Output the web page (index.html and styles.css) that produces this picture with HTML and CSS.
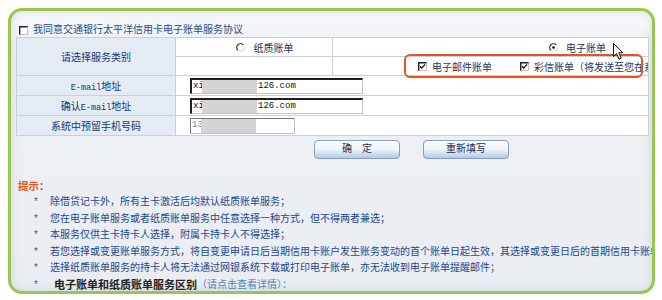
FILE: index.html
```html
<!DOCTYPE html>
<html lang="zh-CN">
<head>
<meta charset="utf-8">
<title>电子账单服务</title>
<link rel="stylesheet" href="styles.css">
</head>
<body>
<div class="frame">
  <div class="agree">
    <svg class="cb" width="9" height="9" viewBox="0 0 9 9"><rect x="0.5" y="0.5" width="8" height="8" fill="#fff" stroke="#c4c4c4"/><path d="M0.7 8.5V0.7H8.5" fill="none" stroke="#222" stroke-width="1.4"/></svg>
    <span>我同意交通银行太平洋信用卡电子账单服务协议</span>
  </div>
  <table class="form">
    <colgroup><col class="c1"><col class="c2"><col class="c3"></colgroup>
    <tr class="r1">
      <th rowspan="2">请选择服务类别</th>
      <td class="paper">
        <svg class="rd" width="9" height="9" viewBox="0 0 10 10"><circle cx="5" cy="5" r="4.2" fill="#fff" stroke="#cfcfcf"/><path d="M7.97 2.03A4.2 4.2 0 0 0 2.03 7.97" fill="none" stroke="#222" stroke-width="1.3"/></svg>
        <span>纸质账单</span>
      </td>
      <td class="ebill">
        <svg class="rd" width="9" height="9" viewBox="0 0 10 10"><circle cx="5" cy="5" r="4.2" fill="#fff" stroke="#cfcfcf"/><path d="M7.97 2.03A4.2 4.2 0 0 0 2.03 7.97" fill="none" stroke="#222" stroke-width="1.3"/><circle cx="5" cy="5" r="1.5" fill="#111"/></svg>
        <span>电子账单</span>
      </td>
    </tr>
    <tr class="r1b">
      <td></td>
      <td class="opts">
        <span class="opt">
          <svg class="cb" width="9" height="9" viewBox="0 0 9 9"><rect x="0.5" y="0.5" width="8" height="8" fill="#fff" stroke="#c4c4c4"/><path d="M0.7 8.5V0.7H8.5" fill="none" stroke="#222" stroke-width="1.4"/><path d="M2 4.3L3.7 6.1L7.1 2.4" fill="none" stroke="#111" stroke-width="1.3"/></svg>
          <span>电子邮件账单</span>
        </span>
        <span class="opt">
          <svg class="cb" width="9" height="9" viewBox="0 0 9 9"><rect x="0.5" y="0.5" width="8" height="8" fill="#fff" stroke="#c4c4c4"/><path d="M0.7 8.5V0.7H8.5" fill="none" stroke="#222" stroke-width="1.4"/><path d="M2 4.3L3.7 6.1L7.1 2.4" fill="none" stroke="#111" stroke-width="1.3"/></svg>
          <span>彩信账单（将发送至您在系统中预留的手机号码）</span>
        </span>
      </td>
    </tr>
    <tr class="r2">
      <th><span class="en">E-mail</span>地址</th>
      <td colspan="2" class="fcell"><span class="field"><span class="pre">xi</span><span class="blur"></span><span>126.com</span></span></td>
    </tr>
    <tr class="r2">
      <th>确认<span class="en">E-mail</span>地址</th>
      <td colspan="2" class="fcell"><span class="field"><span class="pre">xi</span><span class="blur"></span><span>126.com</span></span></td>
    </tr>
    <tr class="r2">
      <th>系统中预留手机号码</th>
      <td colspan="2" class="fcell"><span class="field short"><span class="pre">13</span><span class="blur"></span></span></td>
    </tr>
  </table>
  <div class="btns">
    <button class="btn">确　定</button>
    <button class="btn">重新填写</button>
  </div>
  <div class="tips-title">提示：</div>
  <ul class="tips">
    <li><span class="b">*</span><span>除借贷记卡外，所有主卡激活后均默认纸质账单服务；</span></li>
    <li><span class="b">*</span><span>您在电子账单服务或者纸质账单服务中任意选择一种方式，但不得两者兼选；</span></li>
    <li><span class="b">*</span><span>本服务仅供主卡持卡人选择，附属卡持卡人不得选择；</span></li>
    <li><span class="b">*</span><span>若您选择或变更账单服务方式，将自变更申请日后当期信用卡账户发生账务变动的首个账单日起生效，其选择或变更日后的首期信用卡账单将</span></li>
    <li><span class="b">*</span><span>选择纸质账单服务的持卡人将无法通过网银系统下载或打印电子账单，亦无法收到电子账单提醒邮件；</span></li>
    <li><span class="b">*</span><span class="strong">电子账单和纸质账单服务区别</span><span class="link">（请点击查看详情）：</span></li>
  </ul>
  <div class="mark"></div>
  <svg class="cursor" width="12" height="18" viewBox="0 0 12 18"><path d="M0.5 0.5L0.5 13.5L3.6 10.6L6 16.2L8.2 15.2L5.8 9.7L9.8 9.7Z" fill="#fff" stroke="#111" stroke-width="1"/></svg>
</div>
</body>
</html>
```

FILE: styles.css
```css
* { box-sizing: border-box; }
html, body { margin: 0; background: #fff; }
body {
  font-family: "Liberation Mono", "Noto Sans CJK SC", monospace;
  font-size: 10px;
  color: #1c4689;
}
.frame {
  position: relative;
  margin: 8px 0 0 8px;
  width: 647px;
  height: 286px;
  border: 3px solid #98c653;
  border-radius: 14px;
  overflow: hidden;
  background: linear-gradient(#f8f9fb 0, #eef1f4 30px, #e9edf1 100%);
  box-shadow: inset 0 0 8px rgba(110, 125, 150, 0.22);
  padding: 13px 0 0 5px;
}
.agree {
  height: 13px;
  line-height: 13px;
  display: flex;
  align-items: center;
  gap: 5px;
  padding-left: 3px;
  color: #264c8a;
  white-space: nowrap;
}
.cb, .rd { display: block; flex: none; }
table.form {
  width: 632px;
  border-collapse: collapse;
  table-layout: fixed;
  background: #fff;
}
col.c1 { width: 159px; }
col.c2 { width: 157px; }
col.c3 { width: 316px; }
th, td {
  border: 1px solid #c9d0da;
  padding: 0;
  white-space: nowrap;
  overflow: hidden;
  font-weight: normal;
  vertical-align: middle;
}
th {
  background: #e4ebf3;
  color: #17376e;
  text-align: center;
}
th .en { font-size: 8.5px; }
tr.r1, tr.r1b { height: 19px; }
tr.r2 { height: 20px; }
.paper, .ebill { color: #1a3460; }
.paper > *, .ebill > * { display: inline-block; vertical-align: middle; }
.paper { text-align: center; padding-left: 22px; }
.ebill { text-align: right; padding-right: 42px; }
.rd { display: inline-block; margin-right: 2px; }
.opts { padding-left: 85px; color: #1a3460; }
.opt { display: inline-flex; align-items: center; gap: 5px; vertical-align: middle; }
.opt + .opt { margin-left: 22px; }
.fcell { padding-left: 14px; }
.field {
  display: inline-flex;
  align-items: stretch;
  vertical-align: middle;
  height: 16px;
  width: 173px;
  background: #fff;
  border: 1px solid #c2c2c2;
  border-top: 2px solid #1e1e1e;
  border-left: 2px solid #1e1e1e;
  font-family: "Liberation Mono", monospace;
  font-size: 9px;
  line-height: 13px;
  color: #111;
}
.field.short {
  width: 105px;
  border-top: 1px solid #777;
  border-left: 1px solid #777;
  color: #888;
}
.field .pre { width: 10px; padding-left: 1px; }
.field .blur { width: 55px; background: #d4d4d4; margin-right: 1px; }
.btns {
  display: flex;
  justify-content: center;
  gap: 23px;
  width: 632px;
  padding-left: 159px;
  margin-top: 4px;
}
.btn {
  width: 86px;
  height: 19px;
  padding: 0;
  border: 1px solid #8c9db5;
  border-radius: 4px;
  background: linear-gradient(#fbfcfe 0%, #eef3f9 50%, #cadcf0 78%, #b2cbe8 100%);
  font-family: inherit;
  font-size: 10px;
  color: #1c2f55;
  line-height: 16px;
}
.tips-title {
  margin-top: 20px;
  padding-left: 2px;
  line-height: 16px;
  font-size: 10.5px;
  font-weight: bold;
  color: #e0561b;
}
ul.tips { list-style: none; margin: 0; padding: 0; }
ul.tips li {
  display: flex;
  line-height: 16.6px;
  white-space: nowrap;
  color: #1c4890;
}
ul.tips .b { flex: none; width: 17px; margin-left: 17px; color: #4d5e7c; }
ul.tips .strong { font-weight: bold; font-size: 11px; color: #222; padding-left: 4px; }
ul.tips .link { color: #4f7dc0; }
.mark {
  position: absolute;
  left: 393px;
  top: 43px;
  width: 239px;
  height: 24px;
  border: 2.5px solid #e4561c;
  border-radius: 6px;
}
.cursor { position: absolute; left: 602px; top: 32px; }
```
